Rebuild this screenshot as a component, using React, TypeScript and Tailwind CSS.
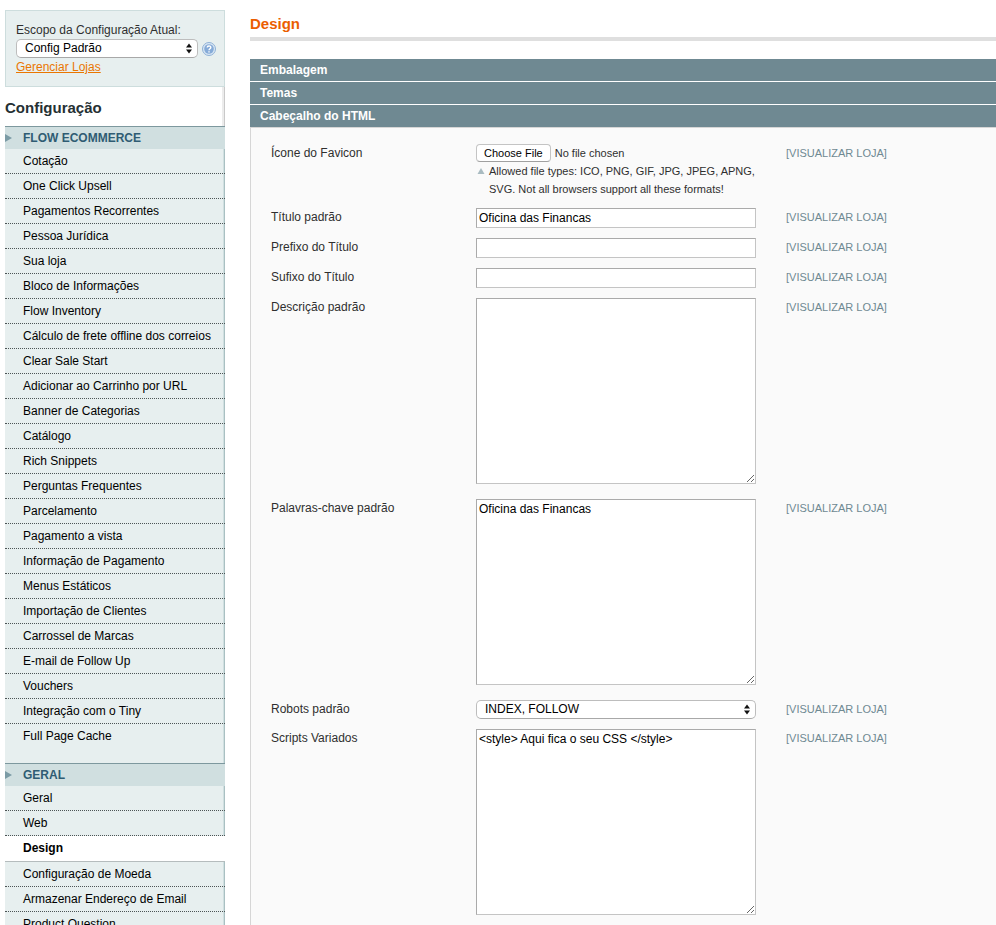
import React from "react";

type ScopedField = {
  id: string;
  label: string;
  type: "file" | "text" | "textarea" | "select";
  value?: string;
};

const groups = [
  {
    title: "Flow Ecommerce",
    items: [
      "Cotação",
      "One Click Upsell",
      "Pagamentos Recorrentes",
      "Pessoa Jurídica",
      "Sua loja",
      "Bloco de Informações",
      "Flow Inventory",
      "Cálculo de frete offline dos correios",
      "Clear Sale Start",
      "Adicionar ao Carrinho por URL",
      "Banner de Categorias",
      "Catálogo",
      "Rich Snippets",
      "Perguntas Frequentes",
      "Parcelamento",
      "Pagamento a vista",
      "Informação de Pagamento",
      "Menus Estáticos",
      "Importação de Clientes",
      "Carrossel de Marcas",
      "E-mail de Follow Up",
      "Vouchers",
      "Integração com o Tiny",
      "Full Page Cache",
    ],
  },
  {
    title: "Geral",
    items: [
      "Geral",
      "Web",
      "Design",
      "Configuração de Moeda",
      "Armazenar Endereço de Email",
      "Product Question",
    ],
  },
];

const sections = ["Embalagem", "Temas", "Cabeçalho do HTML"];

const fields: ScopedField[] = [
  { id: "favicon", label: "Ícone do Favicon", type: "file" },
  { id: "title", label: "Título padrão", type: "text", value: "Oficina das Financas" },
  { id: "prefix", label: "Prefixo do Título", type: "text" },
  { id: "suffix", label: "Sufixo do Título", type: "text" },
  { id: "description", label: "Descrição padrão", type: "textarea" },
  { id: "keywords", label: "Palavras-chave padrão", type: "textarea", value: "Oficina das Financas" },
  { id: "robots", label: "Robots padrão", type: "select", value: "INDEX, FOLLOW" },
  {
    id: "scripts",
    label: "Scripts Variados",
    type: "textarea",
    value: "<style> Aqui fica o seu CSS </style>",
  },
];

const Select = ({ id, value }: { id: string; value: string }) => (
  <div className="relative w-full">
    <select
      id={id}
      defaultValue={value}
      className="block h-[19px] w-full appearance-none rounded-[5px] border border-[#bdbdbd] border-b-[#a8a8a8] bg-white pb-0.5 pl-2 pr-5 text-xs leading-4 text-black"
    >
      <option>{value}</option>
    </select>
    <svg
      className="pointer-events-none absolute right-1.5 top-1"
      width="6"
      height="11"
      viewBox="0 0 6 11"
    >
      <path d="M3 0.5L6 4.5H0zM3 10.5L0 6.5H6z" fill="#111" />
    </svg>
  </div>
);

const HelpIcon = () => (
  <svg width="14" height="14" viewBox="0 0 14 14" className="shrink-0">
    <circle cx="7" cy="7" r="6.5" fill="#dbe8f4" stroke="#8fb0d6" />
    <circle cx="7" cy="7" r="4.8" fill="#86abd8" />
    <path
      d="M5.2 5.6C5.2 3.4 8.8 3.4 8.8 5.5C8.8 6.8 7 6.7 7 8.2M7 9.2V10.4"
      fill="none"
      stroke="#fff"
      strokeWidth="1.4"
    />
  </svg>
);

const FileInput = ({ id }: { id: string }) => (
  <div>
    <input
      id={id}
      type="file"
      className="block h-[18px] w-full text-[11px] leading-4 text-[#2f2f2f] file:mr-1 file:h-[18px] file:rounded-[4px] file:border file:border-solid file:border-[#c4c4c4] file:border-b-[#a0a0a0] file:bg-white file:px-[7px] file:text-[11px] file:leading-4 file:text-black"
    />
    <p className="flex gap-1 text-[11px] leading-[18px] text-[#2f2f2f]">
      <svg width="9" height="18" viewBox="0 0 9 18" className="shrink-0">
        <path d="M5 6L8.5 12H1.5z" fill="#a9bbc1" />
      </svg>
      <span>
        Allowed file types: ICO, PNG, GIF, JPG, JPEG, APNG, SVG. Not all browsers support all these
        formats!
      </span>
    </p>
  </div>
);

const Control = ({ field }: { field: ScopedField }) => {
  const { id, type, value } = field;
  if (type === "file") return <FileInput id={id} />;
  if (type === "select") return <Select id={id} value={value || ""} />;
  if (type === "textarea") {
    return (
      <textarea
        id={id}
        defaultValue={value}
        className="mb-[5px] block h-[186px] w-full border border-[#c4c4c4] border-l-[#aaa] border-t-[#aaa] bg-white px-0.5 py-px text-xs leading-4 text-black"
      />
    );
  }
  return (
    <input
      id={id}
      type="text"
      defaultValue={value}
      className="block h-5 w-full border border-[#c4c4c4] border-l-[#aaa] border-t-[#aaa] bg-white px-0.5 text-xs leading-4 text-black"
    />
  );
};

const NavItem = ({ name }: { name: string }) => {
  if (name === "Design") {
    return (
      <li className="border-b border-[#b5bcbd] bg-white">
        <a href="#" className="block pl-[18px] text-xs font-bold leading-[25px] text-black">
          {name}
        </a>
      </li>
    );
  }
  return (
    <li className="border-b border-dotted border-[#4c5455] last:border-b-0">
      <a
        href="#"
        className="block border-r border-[#a9c0c2] bg-[#e7efef] pl-[18px] text-xs leading-6 text-black shadow-[inset_-1px_0_0_#d0dfe0]"
      >
        {name}
      </a>
    </li>
  );
};

const Sidebar = () => (
  <aside className="w-[220px] shrink-0 pt-2.5">
    <div className="h-[77px] border border-[#cddddd] bg-[#e7efef] pl-2.5 pr-2 pt-2.5">
      <label htmlFor="scope" className="block text-xs leading-[18px] text-[#2f2f2f]">
        Escopo da Configuração Atual:
      </label>
      <div className="flex items-center gap-1">
        <div className="flex-1">
          <Select id="scope" value="Config Padrão" />
        </div>
        <HelpIcon />
      </div>
      <a href="#" className="block text-xs leading-[18px] text-[#ea7601] underline">
        Gerenciar Lojas
      </a>
    </div>
    <h3 className="h-[39px] border-r border-[#c9c9c9] text-[15px] font-bold leading-[42px] text-[#253033] shadow-[inset_-2px_0_0_#ececec]">
      Configuração
    </h3>
    {groups.map(({ title, items }) => (
      <nav key={title}>
        <h4 className="flex h-[23px] items-center border-t border-[#7d989e] bg-[#d0dfe0] text-xs font-bold uppercase text-[#2f5c73]">
          <svg width="18" height="8" viewBox="0 0 18 8">
            <path d="M0 0L7 4L0 8z" fill="#7b9ba5" />
          </svg>
          {title}
        </h4>
        <ul className="border-r border-[#a9c0c2] bg-[#e7efef] pb-[15px] shadow-[inset_-1px_0_0_#d0dfe0] *:-mr-px">
          {items.map((name) => (
            <NavItem key={name} name={name} />
          ))}
        </ul>
      </nav>
    ))}
  </aside>
);

const App = () => {
  return (
    <div className="flex min-h-screen gap-[25px] bg-white pl-[5px] font-['Liberation_Sans',Arial,sans-serif]">
      <Sidebar />
      <main className="flex min-w-0 flex-1 flex-col">
        <h1 className="h-[41px] shrink-0 border-b-4 border-[#dfdfdf] pt-3.5 text-[15px] font-bold leading-5 text-[#eb5e00]">
          Design
        </h1>
        <div className="mt-[18px] flex flex-col gap-px">
          {sections.map((name) => (
            <h2
              key={name}
              className="h-[22px] bg-[#6f8992] px-2.5 text-xs font-bold leading-[22px] text-white"
            >
              {name}
            </h2>
          ))}
        </div>
        <form className="flex-1 border-l border-t border-[#d6d6d6] bg-[#fafafa] pl-5 pt-[11px]">
          {fields.map((field) => (
            <div key={field.id} className="flex py-[5px]">
              <label
                htmlFor={field.id}
                className="w-[205px] shrink-0 text-xs leading-[18px] text-[#2f2f2f]"
              >
                {field.label}
              </label>
              <div className="w-[280px] shrink-0">
                <Control field={field} />
              </div>
              <span className="pl-[30px] text-[11px] uppercase leading-[18px] text-[#6f8992]">
                [Visualizar Loja]
              </span>
            </div>
          ))}
        </form>
      </main>
    </div>
  );
};

export default App;
